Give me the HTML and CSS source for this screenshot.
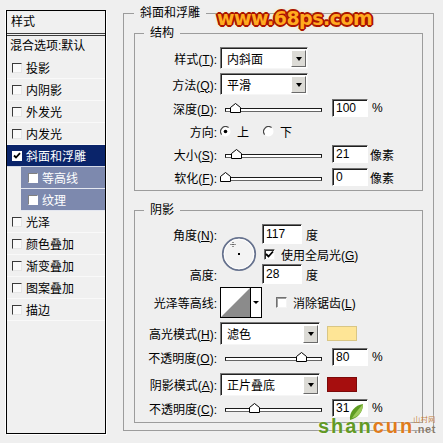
FILE: index.html
```html
<!DOCTYPE html>
<html lang="zh">
<head>
    <meta charset="UTF-8">
    <title>图层样式 - 斜面和浮雕</title>
    <link rel="stylesheet" href="styles.css">
</head>
<body>
    <div class="dialog">
        <!-- style list on the left -->
        <div class="style-list">
            <div class="list-head">样式</div>
            <div class="list-blend">混合选项:默认</div>
            <div class="list-item"><span class="list-box"></span>投影</div>
            <div class="list-item"><span class="list-box"></span>内阴影</div>
            <div class="list-item"><span class="list-box"></span>外发光</div>
            <div class="list-item"><span class="list-box"></span>内发光</div>
            <div class="list-item active">
                <span class="list-box checked"><svg width="8" height="8" viewBox="0 0 8 8"><path d="M1 3.5 L3 5.5 L7 1.2" fill="none" stroke="#000" stroke-width="1.8"/></svg></span>斜面和浮雕
            </div>
            <div class="list-item sub"><span class="list-box"></span>等高线</div>
            <div class="list-item sub"><span class="list-box"></span>纹理</div>
            <div class="list-item"><span class="list-box"></span>光泽</div>
            <div class="list-item"><span class="list-box"></span>颜色叠加</div>
            <div class="list-item"><span class="list-box"></span>渐变叠加</div>
            <div class="list-item"><span class="list-box"></span>图案叠加</div>
            <div class="list-item"><span class="list-box"></span>描边</div>
        </div>

        <!-- settings -->
        <fieldset class="group outer">
            <legend>斜面和浮雕</legend>

            <fieldset class="group inner">
                <legend>结构</legend>
                <div class="row row-select first">
                    <span class="lbl">样式(<u>T</u>):</span>
                    <div class="combo"><span>内斜面</span><i class="combo-arrow"></i></div>
                </div>
                <div class="row row-select">
                    <span class="lbl">方法(<u>Q</u>):</span>
                    <div class="combo"><span>平滑</span><i class="combo-arrow"></i></div>
                </div>
                <div class="row tight">
                    <span class="lbl">深度(<u>D</u>):</span>
                    <div class="slider"><div class="track"><svg class="thumb" style="left:10%" width="11" height="10" viewBox="0 0 11 10"><polygon points="0.5,9.5 0.5,4.5 5.5,0.5 10.5,4.5 10.5,9.5" fill="#fff" stroke="#000"/></svg></div></div>
                    <div class="num">100</div>
                    <span class="unit">%</span>
                </div>
                <div class="row">
                    <span class="lbl">方向:</span>
                    <svg class="radio" width="11" height="11" viewBox="0 0 11 11"><circle cx="5.5" cy="5.5" r="5" fill="#fff"/><path d="M1.6 8.6 A5 5 0 0 1 8.6 1.6" fill="none" stroke="#444" stroke-width="1.2"/><circle cx="5.5" cy="5.5" r="1.8" fill="#000"/></svg>
                    <span class="radio-text">上</span>
                    <svg class="radio" width="11" height="11" viewBox="0 0 11 11"><circle cx="5.5" cy="5.5" r="5" fill="#fff"/><path d="M1.6 8.6 A5 5 0 0 1 8.6 1.6" fill="none" stroke="#444" stroke-width="1.2"/></svg>
                    <span class="radio-text">下</span>
                </div>
                <div class="row">
                    <span class="lbl">大小(<u>S</u>):</span>
                    <div class="slider"><div class="track"><svg class="thumb" style="left:12%" width="11" height="10" viewBox="0 0 11 10"><polygon points="0.5,9.5 0.5,4.5 5.5,0.5 10.5,4.5 10.5,9.5" fill="#fff" stroke="#000"/></svg></div></div>
                    <div class="num">21</div>
                    <span class="unit px">像素</span>
                </div>
                <div class="row">
                    <span class="lbl">软化(<u>F</u>):</span>
                    <div class="slider"><div class="track"><svg class="thumb" style="left:0%" width="11" height="10" viewBox="0 0 11 10"><polygon points="0.5,9.5 0.5,4.5 5.5,0.5 10.5,4.5 10.5,9.5" fill="#fff" stroke="#000"/></svg></div></div>
                    <div class="num">0</div>
                    <span class="unit px">像素</span>
                </div>
            </fieldset>

            <fieldset class="group inner shadow">
                <legend>阴影</legend>
                <div class="angle">
                    <span class="lbl">角度(<u>N</u>):</span>
                    <svg class="dial" width="36" height="36" viewBox="0 0 36 36">
                        <circle cx="18" cy="18" r="16.2" fill="#f3f3f3" stroke="#66728e" stroke-width="1.8"/>
                        <circle cx="18" cy="18" r="14.8" fill="none" stroke="#fff" stroke-width="1"/>
                        <path d="M9.5 8.5 H14.5 M12 6 V11" stroke="#333" stroke-width="1" stroke-dasharray="1 1"/>
                        <rect x="17" y="17" width="2" height="2" fill="#000"/>
                    </svg>
                    <div class="angle-val"><div class="num wide">117</div><span class="unit">度</span></div>
                    <div class="angle-check">
                        <span class="check"><svg width="9" height="9" viewBox="0 0 9 9"><path d="M1 4 L3.5 6.5 L8 1.5" fill="none" stroke="#000" stroke-width="1.8"/></svg></span>
                        <span class="check-text">使用全局光(<u>G</u>)</span>
                    </div>
                    <span class="lbl alt">高度:</span>
                    <div class="angle-val alt"><div class="num wide">28</div><span class="unit">度</span></div>
                </div>
                <div class="row row-contour">
                    <span class="lbl">光泽等高线:</span>
                    <div class="contour">
                        <svg width="29" height="29" viewBox="0 0 29 29"><polygon points="0,29 29,0 29,29" fill="#8b8b8b"/></svg>
                        <i class="contour-arrow"></i>
                    </div>
                    <span class="check spaced"></span>
                    <span class="check-text">消除锯齿(<u>L</u>)</span>
                </div>
                <div class="row row-mode">
                    <span class="lbl">高光模式(<u>H</u>):</span>
                    <div class="combo mode"><span>滤色</span><i class="combo-arrow"></i></div>
                    <span class="swatch light"></span>
                </div>
                <div class="row row-opacity">
                    <span class="lbl">不透明度(<u>O</u>):</span>
                    <div class="slider"><div class="track"><svg class="thumb" style="left:80%" width="11" height="10" viewBox="0 0 11 10"><polygon points="0.5,9.5 0.5,4.5 5.5,0.5 10.5,4.5 10.5,9.5" fill="#fff" stroke="#000"/></svg></div></div>
                    <div class="num">80</div>
                    <span class="unit">%</span>
                </div>
                <div class="row row-mode gap">
                    <span class="lbl">阴影模式(<u>A</u>):</span>
                    <div class="combo mode"><span>正片叠底</span><i class="combo-arrow"></i></div>
                    <span class="swatch dark"></span>
                </div>
                <div class="row row-opacity">
                    <span class="lbl">不透明度(<u>C</u>):</span>
                    <div class="slider"><div class="track"><svg class="thumb" style="left:31%" width="11" height="10" viewBox="0 0 11 10"><polygon points="0.5,9.5 0.5,4.5 5.5,0.5 10.5,4.5 10.5,9.5" fill="#fff" stroke="#000"/></svg></div></div>
                    <div class="num">31</div>
                    <span class="unit">%</span>
                </div>
            </fieldset>
        </fieldset>

        <!-- watermarks -->
        <div class="mark-68ps">www.68ps.com</div>
        <div class="mark-shancun">
            <svg class="leaf" width="16" height="18" viewBox="0 0 16 18"><path d="M2 17 C1 9 7 2 15 1 C15 9 10 15 2 17 Z" fill="#5e9b22"/><path d="M4 15 C7 10 11 6 15 1 C15 9 10 14 4 15 Z" fill="#9cc95a"/></svg>
            <span class="shan">shan</span><span class="cun">cun</span><span class="net"><small>山村网</small>.net</span>
        </div>
    </div>
</body>
</html>
```

FILE: styles.css
```css
/* Page */
body {
    margin: 0;
    background-color: #efefef;
    font-family: "Liberation Sans", "Noto Sans CJK SC", sans-serif;
    font-size: 12px;
    color: #000;
}

.dialog {
    position: relative;
    display: flex;
    align-items: flex-start;
    width: 443px;
    height: 443px;
    padding-left: 6px;
    box-sizing: border-box;
    overflow: hidden;
}

/* Style list */
.style-list {
    width: 100px;
    height: 424px;
    box-sizing: border-box;
    margin-top: 10px;
    margin-right: 17px;
    border: 1px solid #000;
    background-color: #f0f0f0;
    box-shadow: -1px 0 0 #fff, 1px 1px 0 #fff;
}

.list-head {
    height: 22px;
    line-height: 22px;
    padding-left: 4px;
    border-bottom: 3px double #3c3c3c;
}

.list-blend {
    height: 21px;
    line-height: 21px;
    padding-left: 3px;
}

.list-item {
    display: flex;
    align-items: center;
    height: 22px;
    padding-left: 5px;
    box-sizing: border-box;
    border-bottom: 1px solid #f9f9f9;
}

.list-item.active {
    background-color: #0a246a;
    color: #fff;
    border-bottom-color: #d5d9e6;
}

.list-item.sub {
    margin-left: 14px;
    padding-left: 7px;
    background-color: #7d89ae;
    color: #fff;
    border-bottom-color: #e4e7f0;
}

.list-box {
    display: flex;
    align-items: center;
    justify-content: center;
    width: 10px;
    height: 10px;
    margin-right: 4px;
    box-sizing: border-box;
    border: 1px solid;
    border-color: #3a3a3a #e6e6e6 #e6e6e6 #3a3a3a;
    background-color: #fafafa;
}

.list-item.sub .list-box {
    border-color: #808080 #fff #fff #808080;
    background-color: #fff;
}

.list-box.checked {
    background-color: #fff;
    border-color: #fff;
}

/* Group boxes */
.group {
    margin: 0;
    padding: 7px 0 4px 0;
    border: 1px solid #9c9c9c;
    min-width: 0;
    box-sizing: border-box;
}

.group legend {
    padding: 0 6px;
    margin-left: 9px;
    line-height: 14px;
}

.group.outer {
    width: 311px;
    margin-top: 6px;
    padding: 6px 10px 7px 10px;
}

.group.outer > legend {
    margin-left: 0;
}

.group.shadow {
    margin-top: 12px;
    padding-bottom: 5px;
}

/* Rows */
.row {
    display: flex;
    align-items: center;
    height: 18px;
    margin-top: 5px;
}

.row.first {
    margin-top: 0;
}

.row.tight {
    margin-top: 4px;
}

.row-select {
    height: 22px;
    margin-top: 4px;
}

.row-contour {
    height: 31px;
    margin-top: 3px;
}

.row-mode {
    height: 23px;
    margin-top: 4px;
}

.row-mode.gap {
    margin-top: 7px;
}

.row-opacity {
    margin-top: 3px;
}

.lbl {
    flex: none;
    width: 82px;
    margin-right: 3px;
    text-align: right;
    white-space: nowrap;
}

/* Combo box */
.combo {
    display: flex;
    align-items: center;
    width: 88px;
    height: 100%;
    box-sizing: border-box;
    padding-left: 6px;
    background-color: #fff;
    border: 1px solid;
    border-color: #7a7a7a #f6f6f6 #f6f6f6 #7a7a7a;
    box-shadow: inset 1px 1px 0 #222;
}

.combo.mode {
    width: 100px;
}

.combo span {
    flex: 1;
}

.combo-arrow {
    display: flex;
    align-items: center;
    justify-content: center;
    width: 15px;
    height: calc(100% - 3px);
    margin: 1px 1px 0 0;
    box-sizing: border-box;
    background-color: #dcdbd6;
    border: 1px solid;
    border-color: #fff #6a6a6a #6a6a6a #fff;
}

.combo-arrow::after {
    content: "";
    border-left: 3px solid transparent;
    border-right: 3px solid transparent;
    border-top: 4px solid #000;
}

/* Slider */
.slider {
    flex: none;
    width: 112px;
    padding: 0 10px 0 5px;
    box-sizing: border-box;
}

.track {
    position: relative;
    height: 4px;
    margin-top: 3px;
    box-sizing: border-box;
    border: 1px solid #1a1a1a;
    border-bottom-color: #666;
    background-color: #fff;
}

.thumb {
    position: absolute;
    top: -6px;
    margin-left: -6px;
}

/* Number box */
.num {
    flex: none;
    width: 36px;
    height: 18px;
    box-sizing: border-box;
    padding: 1px 0 0 3px;
    line-height: 15px;
    background-color: #fff;
    border: 1px solid;
    border-color: #6f6f6f #fff #fff #6f6f6f;
    box-shadow: inset 1px 1px 0 #1e1e1e;
}

.num.wide {
    width: 40px;
    height: 20px;
    padding-top: 2px;
}

.unit {
    margin-left: 4px;
}

.unit.px {
    margin-left: 2px;
}

/* Radio */
.radio {
    flex: none;
}

.radio-text {
    margin: 0 14px 0 6px;
}

/* Angle block */
.angle {
    display: grid;
    grid-template-columns: 85px 42px 1fr;
    grid-template-rows: 20px 20px 20px;
    align-items: center;
}

.angle .lbl {
    grid-column: 1;
    grid-row: 1;
}

.angle .lbl.alt {
    grid-row: 3;
}

.dial {
    grid-column: 2;
    grid-row: 1 / 4;
    margin-left: 1px;
}

.angle-val {
    grid-column: 3;
    grid-row: 1;
    display: flex;
    align-items: center;
}

.angle-val.alt {
    grid-row: 3;
}

.angle-check {
    grid-column: 3;
    grid-row: 2;
    display: flex;
    align-items: center;
    padding-left: 2px;
}

/* Checkbox */
.check {
    display: flex;
    align-items: center;
    justify-content: center;
    flex: none;
    width: 11px;
    height: 11px;
    box-sizing: border-box;
    background-color: #fff;
    border: 1px solid;
    border-color: #707070 #f4f4f4 #f4f4f4 #707070;
    box-shadow: inset 1px 1px 0 #2a2a2a;
}

.check.spaced {
    margin-left: 14px;
    box-shadow: inset 1px 1px 0 #a0a0a0;
}

.check-text {
    margin-left: 6px;
    white-space: nowrap;
}

/* Contour picker */
.contour {
    display: flex;
    width: 42px;
    height: 31px;
    box-sizing: border-box;
    border: 1px solid #000;
    background-color: #fff;
}

.contour svg {
    display: block;
}

.contour-arrow {
    display: flex;
    align-items: center;
    justify-content: center;
    flex: 1;
    border-left: 1px solid #000;
}

.contour-arrow::after {
    content: "";
    border-left: 3px solid transparent;
    border-right: 3px solid transparent;
    border-top: 3px solid #000;
}

/* Color swatches */
.swatch {
    width: 30px;
    height: 15px;
    margin-left: 7px;
    box-sizing: border-box;
    border: 1px solid;
}

.swatch.light {
    background-color: #fee596;
    border-color: #d9c684;
}

.swatch.dark {
    background-color: #a60e0e;
    border-color: #7c0a0a;
}

/* Watermarks */
.mark-68ps {
    position: absolute;
    left: 217px;
    top: 9px;
    font-family: "DejaVu Sans", sans-serif;
    font-size: 19px;
    font-weight: bold;
    line-height: 19px;
    letter-spacing: -0.5px;
    color: #ffab1f;
    text-shadow:
        1px 0 #ab1500, -1px 0 #ab1500, 0 1px #ab1500, 0 -1px #ab1500,
        1px 1px #ab1500, -1px -1px #ab1500, 1px -1px #ab1500, -1px 1px #ab1500,
        2px 0 #ab1500, -2px 0 #ab1500, 0 2px #ab1500, 0 -2px #ab1500,
        0 0 5px #ffe36a;
}

.mark-shancun {
    position: absolute;
    left: 318px;
    top: 419px;
    white-space: nowrap;
    font-family: "Liberation Sans", sans-serif;
    font-size: 20px;
    font-weight: bold;
    line-height: 14px;
    letter-spacing: 2px;
    text-shadow: 0 0 3px #fff;
}

.leaf {
    position: absolute;
    left: 30px;
    top: -16px;
}

.shan {
    color: #629a25;
}

.cun {
    color: #e07c1c;
}

.net {
    position: relative;
    font-size: 11px;
    letter-spacing: 0.5px;
    color: #8a7c6c;
}

.net small {
    position: absolute;
    right: 0;
    top: -8px;
    font-family: "Noto Sans CJK SC", sans-serif;
    font-size: 7px;
    line-height: 8px;
    font-weight: normal;
    color: #c07a3a;
}
```
